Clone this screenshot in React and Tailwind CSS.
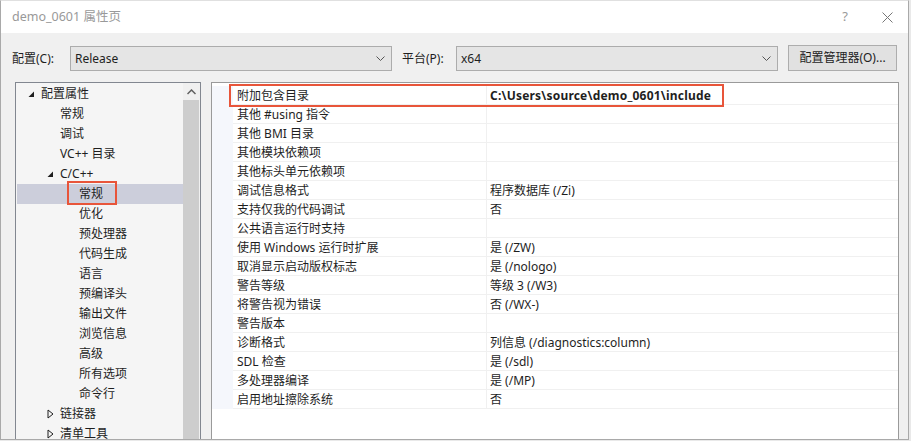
const font = "font-['Noto_Sans','Noto_Sans_CJK_SC',sans-serif]"

const tree = [
  { label: '配置属性', level: 0, icon: 'open' },
  { label: '常规', level: 1 },
  { label: '调试', level: 1 },
  { label: 'VC++ 目录', level: 1 },
  { label: 'C/C++', level: 1, icon: 'open' },
  { label: '常规', level: 2, selected: true },
  { label: '优化', level: 2 },
  { label: '预处理器', level: 2 },
  { label: '代码生成', level: 2 },
  { label: '语言', level: 2 },
  { label: '预编译头', level: 2 },
  { label: '输出文件', level: 2 },
  { label: '浏览信息', level: 2 },
  { label: '高级', level: 2 },
  { label: '所有选项', level: 2 },
  { label: '命令行', level: 2 },
  { label: '链接器', level: 1, icon: 'closed' },
  { label: '清单工具', level: 1, icon: 'closed' },
]

const props = [
  ['附加包含目录', 'C:\\Users\\source\\demo_0601\\include', true],
  ['其他 #using 指令', ''],
  ['其他 BMI 目录', ''],
  ['其他模块依赖项', ''],
  ['其他标头单元依赖项', ''],
  ['调试信息格式', '程序数据库 (/Zi)'],
  ['支持仅我的代码调试', '否'],
  ['公共语言运行时支持', ''],
  ['使用 Windows 运行时扩展', '是 (/ZW)'],
  ['取消显示启动版权标志', '是 (/nologo)'],
  ['警告等级', '等级 3 (/W3)'],
  ['将警告视为错误', '否 (/WX-)'],
  ['警告版本', ''],
  ['诊断格式', '列信息 (/diagnostics:column)'],
  ['SDL 检查', '是 (/sdl)'],
  ['多处理器编译', '是 (/MP)'],
  ['启用地址擦除系统', '否'],
]

function Chevron() {
  return (
    <svg width="9" height="6" viewBox="0 0 9 6" className="shrink-0">
      <polyline points="0.5,0.5 4.5,4.5 8.5,0.5" fill="none" stroke="#555" strokeWidth="1" />
    </svg>
  )
}

function Select({ value }) {
  return (
    <div className="w-[322px] h-[25px] bg-[#e5e5e5] border border-[#acacac] flex items-center justify-between pl-[4px] pr-[6px]">
      <span className="text-[12px] text-[#1e1e1e]">{value}</span>
      <Chevron />
    </div>
  )
}

function Expander({ type }) {
  if (type === 'open') {
    return (
      <svg width="7" height="7" viewBox="0 0 7 7">
        <polygon points="6,0.5 6,6 0.5,6" fill="#1e1e1e" />
      </svg>
    )
  }
  return (
    <svg width="7" height="10" viewBox="0 0 7 10">
      <polygon points="1,1 6,5 1,9" fill="none" stroke="#1e1e1e" strokeWidth="1" />
    </svg>
  )
}

export default function App() {
  return (
    <div className={`w-[911px] h-[441px] bg-[#e9e9e9] overflow-hidden ${font}`}>
      <div className="w-[909px] h-[440px] border border-[#a9a9a9] border-t-[#e0e0e0] flex flex-col bg-[#f0f0f0] overflow-hidden">
        {/* title bar */}
        <div className="h-[32px] bg-white flex items-center justify-between pl-[11px] pr-[15px] shrink-0">
          <span className="text-[12.5px] text-[#999]">demo_0601 属性页</span>
          <div className="flex items-center gap-[34px]">
            <span className="text-[13px] text-[#999]">?</span>
            <svg width="11" height="11" viewBox="0 0 11 11">
              <path d="M0.5 0.5 L10.5 10.5 M10.5 0.5 L0.5 10.5" stroke="#777" strokeWidth="1" />
            </svg>
          </div>
        </div>

        {/* config row */}
        <div className="h-[49px] shrink-0 flex items-center pl-[11px] pt-[2px]">
          <span className="text-[12px] text-[#1e1e1e] w-[58px]">配置(C):</span>
          <Select value="Release" />
          <span className="text-[12px] text-[#1e1e1e] ml-[10px] w-[54px]">平台(P):</span>
          <Select value="x64" />
          <button className="ml-[10px] w-[109px] h-[26px] bg-[#e1e1e1] border border-[#adadad] text-[12px] text-[#1e1e1e] -mt-[2px]">
            配置管理器(O)...
          </button>
        </div>

        {/* panels */}
        <div className="flex-1 flex pl-[14px] gap-[10px] overflow-hidden">
          {/* tree */}
          <div className="w-[186px] h-[400px] border border-[#828790] bg-[#f5f5f5] flex shrink-0 relative">
            <div className="flex-1 flex flex-col pl-[1px] pt-[1px]">
              {tree.map((t, i) => (
                <div
                  key={i}
                  className={`h-[20px] shrink-0 flex items-center text-[12px] text-[#1e1e1e] ${t.selected ? 'bg-[#cccedb]' : ''}`}
                >
                  <div
                    className={`flex items-center ${t.level === 0 ? 'w-[24px] pl-[11px]' : t.level === 1 ? 'w-[43px] pl-[30px]' : 'w-[62px]'}`}
                  >
                    {t.icon ? <Expander type={t.icon} /> : null}
                  </div>
                  <span className="leading-[20px]">{t.label}</span>
                </div>
              ))}
            </div>
            <div className="w-[17px] bg-[#f0f0f0] flex flex-col shrink-0">
              <div className="h-[17px] flex items-center justify-center">
                <svg width="9" height="6" viewBox="0 0 9 6">
                  <polyline points="0.5,5 4.5,1 8.5,5" fill="none" stroke="#606060" strokeWidth="1.5" />
                </svg>
              </div>
              <div className="flex-1 bg-[#cdcdcd] mr-[1px]" />
            </div>
            <div className="absolute left-[51px] top-[98px] w-[50px] h-[24px] border-2 border-[#e8553a]" />
          </div>

          {/* property grid */}
          <div className="w-[688px] h-[400px] border border-[#9a9a9a] bg-white shrink-0 relative">
            <div className="flex flex-col pt-[3px]">
              {props.map(([k, v, bold], i) => (
                <div key={i} className="h-[19px] flex text-[12px] text-[#1e1e1e]">
                  <div className="w-[21px] bg-[#f5f7fc] shrink-0" />
                  <div className="w-[254px] shrink-0 border-b border-r border-[#f0f0f0] pl-[4px] leading-[19px]">{k}</div>
                  <div className={`flex-1 border-b border-[#f0f0f0] pl-[3px] leading-[19px] ${bold ? 'font-bold tracking-[0.2px]' : ''}`}>{v}</div>
                </div>
              ))}
            </div>
            <div className="absolute left-[17px] top-[1px] w-[495px] h-[23px] border-2 border-[#e8553a]" />
          </div>
        </div>
      </div>
    </div>
  )
}
